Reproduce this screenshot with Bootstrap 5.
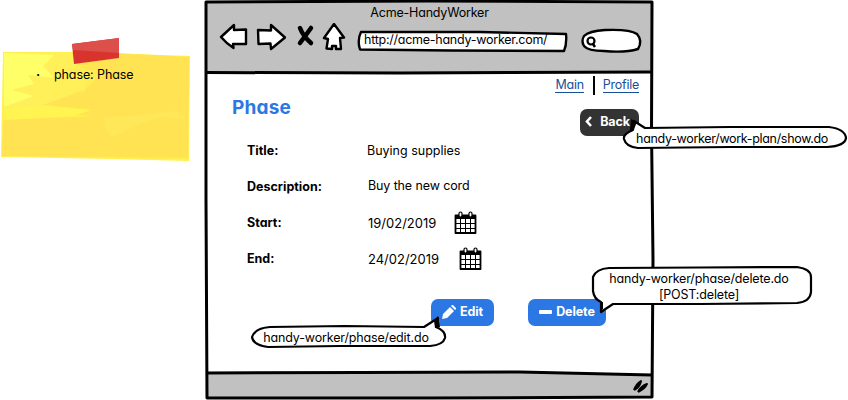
<!DOCTYPE html>
<html lang="en">
<head>
<meta charset="utf-8">
<title>Acme-HandyWorker</title>
<link href="https://cdn.jsdelivr.net/npm/bootstrap@5.3.0/dist/css/bootstrap.min.css" rel="stylesheet">
<style>
  body { font-family: Inter, "Open Sans", sans-serif; font-feature-settings: "cv11"; font-size: 12.5px; line-height: 16px; color: #000; background: #fff; }
  .board { width: 848px; height: 400px; }
  .sketch { position: absolute; left: 0; top: 0; overflow: visible; pointer-events: none; }
  .note { width: 190px; height: 108px; margin-top: 53px; padding: 14px 0 0 36px; }
  .note-dot { font-weight: 700; width: 18px; }
  .note-text { letter-spacing: -.1px; }
  .browser { width: 449px; height: 400px; margin-left: 15px; }
  .chrome-top { height: 75px; padding-top: 5px; }
  .window-title { letter-spacing: -.2px; }
  .toolbar { height: 35px; padding-left: 14px; }
  .toolbar svg { flex: none; }
  .tool { margin-top: 2px; }
  .tool-home { margin-left: 15px; }
  .address { width: 210px; height: 24px; margin: 7px 0 0 10px; padding-left: 7px; letter-spacing: -.25px; }
  .search { margin: 7px 0 0 15px; }
  .page { padding: 0 15px 0 27px; }
  .links { height: 24px; padding-bottom: 4px; letter-spacing: -.25px; }
  .links a { color: #1a4f98; text-decoration: none; border-bottom: 1px solid #1a4f98; line-height: 14px; }
  .divider { width: 2px; height: 19px; background: #000; margin: 0 8px 0 9px; }
  .heading-row { height: 37px; }
  .page-title { font-size: 19px; line-height: 18px; font-weight: 700; color: #2b78e4; letter-spacing: .2px; }
  .sk-btn { height: 27px; border: 0; border-radius: 7px; padding: 0 0 2px; font-size: 12.5px; line-height: 16px; font-weight: 700; color: #fff; letter-spacing: -.1px; }
  .sk-back { width: 59px; background: #333; padding-right: 4px; }
  .sk-edit { width: 63px; background: #2b78e4; margin-left: 199px; }
  .sk-delete { width: 78px; background: #2b78e4; margin-left: 34px; }
  .fields { gap: 6px; padding-left: 15px; }
  .field { height: 30px; }
  .field-name { width: 120px; font-weight: 700; }
  .t-desc { letter-spacing: -.12px; padding: 0 0 2px 1px; }
  .t-date { font-size: 13px; padding-left: 1px; width: 73px; }
  .cal { margin: 0 0 2px 14px; }
  .cal-end { margin-left: 19px; }
  .actions { margin-top: 25px; }
  .callout { position: absolute; text-align: center; white-space: nowrap; }
  .c-show { left: 624px; top: 131px; width: 216px; letter-spacing: -.32px; }
  .c-edit { left: 252px; top: 330px; width: 188px; letter-spacing: -.15px; }
  .c-delete { left: 592px; top: 271px; width: 214px; letter-spacing: -.16px; }
</style>
</head>
<body>
<main class="board position-relative d-flex overflow-hidden">
  <aside class="note position-relative flex-shrink-0">
    <svg class="sketch" width="190" height="108" viewBox="0 53 190 108">
      <path d="M3 52L75 52L190 56L189 161L110 159L1 157Z" fill="#fff04f"/>
      <path d="M4 53L115 53L189 57L188 158L2 156L3 120L95 116L30 112L12 107L45 97L18 87L58 84L36 75L75 77L50 65L95 67Z" fill="#ffe352"/>
      <path d="M4 53L72 53L78 66L92 72L84 90L62 98L40 106L4 110Z" fill="#fff05a"/>
      <path d="M4 53L54 55L43 66L54 78L28 75L34 84L11 90L34 96L4 107Z" fill="#ffff68"/>
      <path d="M5 109L45 105L92 110L73 116L40 118L3 120Z" fill="#fff450"/>
      <path d="M60 68L112 71L94 81L80 96L91 76Z" fill="#ffec53"/>
      <path d="M104 117L144 115L177 111L186 119L161 117L140 124L111 137L105 128Z" fill="#ffe75a"/>
      <path d="M72 44L119 38L119 58L74 64Z" fill="#d9332d"/>
      <path d="M72 44L119 38L119 53L73 50Z" fill="#dc4f4a"/>
    </svg>
    <div class="position-relative d-flex"><span class="note-dot">·</span><span class="note-text">phase: Phase</span></div>
  </aside>

  <section class="browser position-relative flex-shrink-0 d-flex flex-column">
    <svg class="sketch" width="449" height="400" viewBox="205 0 449 400">
      <path d="M207 2H652V73H207ZM207 373L500 372L652 375V397H207Z" fill="#c1c1c1"/>
      <g fill="none" stroke="#000" stroke-width="3" stroke-linejoin="round">
        <path d="M206 2L430 1L652 2L651.5 130L653 260L652 397L430 398L207 398L206 200Z"/>
        <path d="M206 72.5L400 73L652 72M206 373L360 372.5L520 372L652 375"/>
      </g>
      <path d="M634 390Q636 384 641 381Q640 387 634 390M638 392Q641 386 647 384Q645 389 638 392" fill="#000" stroke="#000" stroke-width="2" stroke-linejoin="round"/>
    </svg>

    <header class="chrome-top position-relative">
      <div class="window-title text-center">Acme-HandyWorker</div>
      <div class="toolbar d-flex align-items-start">
        <svg class="tool" width="29" height="28" viewBox="219 23 29 28"><path d="M221 37L234 25V30L246 29.500L246 44L233 44L233.500 48Q226 43 221 37Z" fill="#fff" stroke="#000" stroke-width="2.400" stroke-linejoin="round"/></svg>
        <svg class="tool ms-2" width="30" height="28" viewBox="256 23 30 28"><path d="M258 30L271 30.500L271 25L285 37.500L271 49L270.500 43.500L258.500 44Z" fill="#fff" stroke="#000" stroke-width="2.400" stroke-linejoin="round"/></svg>
        <svg class="tool" width="19" height="28" viewBox="286 23 19 28" style="overflow:visible"><path d="M300 28Q303 36 311 43M311 28Q306 35 300 43" fill="none" stroke="#000" stroke-width="4.500" stroke-linecap="round"/></svg>
        <svg class="tool tool-home" width="27" height="28" viewBox="320 23 27 28"><path d="M334 24L344 37.500L340 38L341 49L336 49V46L332 46V49L326.500 48.500L328 39L324 38Z" fill="#fff" stroke="#000" stroke-width="2.400" stroke-linejoin="round"/></svg>
        <div class="address position-relative d-flex align-items-center">
          <svg class="sketch" width="210" height="24" viewBox="357 28 210 24"><path d="M361 32L480 32L566 34Q567 44 564 51L450 50.500L360 49.500Q357 40 361 32Z" fill="#fff" stroke="#000" stroke-width="2.400" stroke-linejoin="round"/></svg>
          <span class="position-relative">http://acme-handy-worker.com/</span>
        </div>
        <svg class="search" width="60" height="26" viewBox="582 28 60 26" style="overflow:visible"><path d="M584 36Q589 31 605 30Q630 29 637 34Q643 41 638 49Q625 53 604 51Q588 51 584 46Q581 41 584 36Z" fill="#fff" stroke="#000" stroke-width="2.400"/><circle cx="591" cy="41" r="3.500" fill="none" stroke="#000" stroke-width="2.200"/><path d="M593 44L595 47" stroke="#000" stroke-width="2.500"/></svg>
      </div>
    </header>

    <div class="page position-relative">
      <nav class="links d-flex justify-content-end align-items-center">
        <a href="#">Main</a><span class="divider"></span><a href="#">Profile</a>
      </nav>
      <div class="heading-row d-flex justify-content-between align-items-end">
        <h1 class="page-title mb-0 align-self-start">Phase</h1>
        <button class="sk-btn sk-back d-flex align-items-center justify-content-center gap-2">
          <svg width="7" height="11" viewBox="0 0 7 11"><path d="M6 1L2 5.500L6 10" fill="none" stroke="#fff" stroke-width="2.600"/></svg>Back</button>
      </div>
      <div class="fields d-flex flex-column">
        <div class="field d-flex align-items-center"><span class="field-name">Title:</span><span>Buying supplies</span></div>
        <div class="field d-flex align-items-center"><span class="field-name">Description:</span><span class="t-desc">Buy the new cord</span></div>
        <div class="field d-flex align-items-center"><span class="field-name">Start:</span><span class="t-date">19/02/2019</span>
          <svg class="cal" width="23" height="23" viewBox="0 0 23 23"><use href="#calendar"/></svg></div>
        <div class="field d-flex align-items-center"><span class="field-name">End:</span><span class="t-date">24/02/2019</span>
          <svg class="cal cal-end" width="23" height="23" viewBox="0 0 23 23"><use href="#calendar"/></svg></div>
      </div>
      <div class="actions d-flex">
        <button class="sk-btn sk-edit d-flex align-items-center justify-content-center gap-1">
          <svg width="14" height="14" viewBox="0 0 14 14"><path d="M0 14L1 9L8 2L12 6L5 13Z M9 1L10 0L11 0L14 3L14 4L13 5Z" fill="#fff"/></svg>Edit</button>
        <button class="sk-btn sk-delete d-flex align-items-center justify-content-center gap-1">
          <svg width="13" height="4" viewBox="0 0 13 4"><rect width="13" height="4" rx="1" fill="#fff"/></svg>Delete</button>
      </div>
    </div>
  </section>

  <svg class="sketch" width="848" height="400" viewBox="0 0 848 400">
    <defs>
      <g id="calendar">
        <path d="M1.500 4.500H21.500V22H1.500Z" fill="#fff" stroke="#000" stroke-width="1.800" stroke-linejoin="round"/>
        <path d="M1 4H22V8H1Z"/>
        <path d="M6.500 8V22M11.500 8V22M16.500 8V22M1 12.500H22M1 17.500H22" stroke="#000" stroke-width="1"/>
        <rect x="5" y="1" width="3" height="5" rx="1.500" fill="#fff" stroke="#000" stroke-width="1.200"/><rect x="15" y="1" width="3" height="5" rx="1.500" fill="#fff" stroke="#000" stroke-width="1.200"/>
      </g>
    </defs>
    <g fill="#fff" stroke="#000" stroke-width="2.200" stroke-linejoin="round">
      <path d="M645 128L634 121L633 130Q623 134 624 139Q626 147 638 148L730 147L827 147Q845 146 846 138Q845 129 829 127L730 127Z"/>
      <path d="M424 327L438 318L436 327Q446 331 445 338Q443 345 430 346L340 346L268 347Q253 345 252 337Q255 328 270 327L345 326Z"/>
      <path d="M613 304L601 312L601 302Q594 299 593 291L593 277Q596 269 609 268L700 267.500L797 267Q811 269 811 277V292Q810 302 797 303L700 304Z"/>
    </g>
    <path d="M631 119L637 122L634 129L630 131ZM438 316L434 321L435 328L440 327ZM600 302L603 302L603 309L600 312Z"/>
  </svg>
  <div class="callout c-show">handy-worker/work-plan/show.do</div>
  <div class="callout c-edit">handy-worker/phase/edit.do</div>
  <div class="callout c-delete">handy-worker/phase/delete.do<br>[POST:delete]</div>
</main>
<script src="https://cdn.jsdelivr.net/npm/bootstrap@5.3.0/dist/js/bootstrap.bundle.min.js"></script>
</body>
</html>
